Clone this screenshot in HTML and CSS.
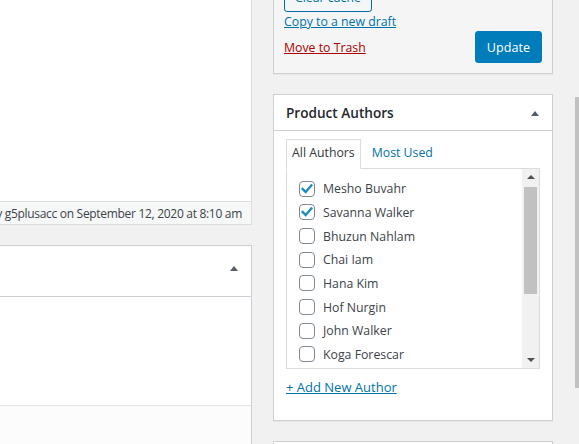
FILE: index.html
```html
<!DOCTYPE html>
<html lang="en">
<head>
<meta charset="utf-8">
<title>Edit Product</title>
<link rel="stylesheet" href="styles.css">
</head>
<body>
<div class="page">
  <div class="main">
    <div class="editor"></div>
    <div class="status"><span class="edited">Last edited by g5plusacc on September 12, 2020 at 8:10 am</span></div>
    <div class="metabox">
      <div class="metabox-head"><span class="tri"></span></div>
      <div class="metabox-body"></div>
      <div class="metabox-foot"></div>
    </div>
  </div>

  <div class="side">
    <div class="postbox publish">
      <div class="actions">
        <button class="btn-secondary">Clear cache</button>
        <div class="copy"><a href="#">Copy to a new draft</a></div>
        <div class="action-row">
          <a href="#" class="trash">Move to Trash</a>
          <button class="btn-primary">Update</button>
        </div>
      </div>
    </div>

    <div class="postbox authors">
      <div class="hndle"><h2>Product Authors</h2><span class="tri"></span></div>
      <div class="inside">
        <ul class="tabs">
          <li class="tab active">All Authors</li>
          <li class="tab"><a href="#">Most Used</a></li>
        </ul>
        <div class="panel">
          <ul class="checklist">
            <li><span class="cb checked"><svg viewBox="0 0 16 16" width="16" height="16"><path d="M3.6 7.9 L6.7 11 L12.4 4.4" fill="none" stroke="#1e8cbe" stroke-width="2.3" stroke-linecap="square"/></svg></span>Mesho Buvahr</li>
            <li><span class="cb checked"><svg viewBox="0 0 16 16" width="16" height="16"><path d="M3.6 7.9 L6.7 11 L12.4 4.4" fill="none" stroke="#1e8cbe" stroke-width="2.3" stroke-linecap="square"/></svg></span>Savanna Walker</li>
            <li><span class="cb"></span>Bhuzun Nahlam</li>
            <li><span class="cb"></span>Chai Iam</li>
            <li><span class="cb"></span>Hana Kim</li>
            <li><span class="cb"></span>Hof Nurgin</li>
            <li><span class="cb"></span>John Walker</li>
            <li><span class="cb"></span>Koga Forescar</li>
          </ul>
          <div class="vscroll">
            <div class="sbtn up"></div>
            <div class="track"><div class="thumb"></div></div>
            <div class="sbtn down"></div>
          </div>
        </div>
        <div class="add-wrap"><a href="#" class="add">+ Add New Author</a></div>
      </div>
    </div>

    <div class="postbox next"></div>
  </div>

  <div class="pagescroll"><div class="pthumb"></div></div>
</div>
</body>
</html>
```

FILE: styles.css
```css
* { box-sizing: border-box; }
html, body { margin: 0; padding: 0; }
body {
  width: 579px;
  height: 444px;
  overflow: hidden;
  background: #f1f1f1;
  font-family: "Open Sans", "Noto Sans", sans-serif;
  font-size: 12.3px;
  color: #444;
}
a { color: #0073aa; text-decoration: underline; }

.page { display: flex; height: 444px; }

/* left column */
.main { width: 252px; flex: none; overflow: hidden; }
.editor { height: 201px; background: #fff; border-right: 1px solid #dcdcde; }
.status {
  height: 24px;
  background: #f6f7f7;
  border: 1px solid #dcdcde;
  border-left: 0;
  display: flex;
  justify-content: flex-end;
  align-items: center;
  padding-right: 9px;
  white-space: nowrap;
  color: #3c434a;
  font-size: 12px;
  letter-spacing: -0.3px;
}
.metabox {
  margin-top: 20px;
  background: #fff;
  border: 1px solid #ccd0d4;
  border-left: 0;
  border-bottom: 0;
}
.metabox-head {
  height: 51px;
  border-bottom: 1px solid #ccd0d4;
  display: flex;
  justify-content: flex-end;
  align-items: flex-start;
  padding: 20px 13px 0 0;
}
.metabox-body { height: 108px; }
.metabox-foot { height: 60px; border-top: 1px solid #e2e4e7; background: #fcfcfc; }

.tri {
  width: 0;
  height: 0;
  border-left: 4px solid transparent;
  border-right: 4px solid transparent;
  border-bottom: 5px solid #555d66;
}

/* right column */
.side { width: 280px; flex: none; margin-left: 21px; margin-top: -29px; }
.postbox {
  background: #fff;
  border: 1px solid #ccd0d4;
  box-shadow: 0 1px 1px rgba(0, 0, 0, 0.04);
  margin-bottom: 20px;
}
.publish .actions { background: #f5f5f5; padding: 10px; }
.btn-secondary {
  display: inline-flex;
  align-items: center;
  height: 30px;
  padding: 0 10px;
  border: 1px solid #0071a1;
  border-radius: 3px;
  background: #f3f5f6;
  color: #0071a1;
  font: inherit;
}
.copy { height: 19px; line-height: 19px; }
.action-row { display: flex; justify-content: space-between; align-items: center; height: 32px; }
.trash { color: #a00; }
.btn-primary {
  height: 32px;
  padding: 0 11px;
  background: #007cba;
  border: 1px solid #007cba;
  border-radius: 3px;
  color: #fff;
  font: inherit;
  font-size: 12.6px;
}

.hndle {
  height: 36px;
  border-bottom: 1px solid #ccd0d4;
  display: flex;
  align-items: center;
  justify-content: space-between;
  padding: 0 13px 0 12px;
}
.hndle h2 { margin: 0; font-size: 13.6px; font-weight: 600; color: #23282d; }
.hndle .tri { margin-top: 2px; }

.inside { padding: 8px 12px 0; }
.tabs { display: flex; gap: 5px; margin: 0; padding: 0; list-style: none; }
.tab { padding: 3px 5px 5px; line-height: 19px; border: 1px solid transparent; }
.tab.active {
  border-color: #dcdcde;
  border-bottom-color: #fff;
  background: #fff;
  color: #32373c;
  margin-bottom: -1px;
  position: relative;
  z-index: 1;
}
.tab a { text-decoration: none; }

.panel { height: 201px; border: 1px solid #dcdcde; background: #fff; display: flex; }
.checklist {
  flex: 1;
  margin: 0;
  padding: 8px 0 0 12px;
  list-style: none;
  overflow: hidden;
}
.checklist li { height: 23.65px; display: flex; align-items: center; color: #3c434a; white-space: nowrap; }
.cb {
  width: 16px;
  height: 16px;
  flex: none;
  border: 1px solid #7e8993;
  border-radius: 4px;
  background: #fff;
  margin-right: 8px;
  display: flex;
  align-items: center;
  justify-content: center;
}
.cb svg { display: block; flex: none; }

.vscroll { width: 17px; flex: none; background: #f1f1f1; display: flex; flex-direction: column; }
.sbtn { height: 17px; display: flex; align-items: center; justify-content: center; }
.sbtn.up::before {
  content: "";
  border-left: 4px solid transparent;
  border-right: 4px solid transparent;
  border-bottom: 4px solid #505050;
  margin-top: -2px;
}
.sbtn.down::before {
  content: "";
  border-left: 4px solid transparent;
  border-right: 4px solid transparent;
  border-top: 4px solid #505050;
}
.track { flex: 1; padding: 1px 2px; }
.thumb { height: 107px; background: #c1c1c1; }

.add-wrap { padding: 8px 0 22px; line-height: 20px; }
.add { font-size: 13px; }

.next { height: 40px; margin-bottom: 0; }

.pagescroll { margin-left: 22px; width: 4px; flex: none; padding-top: 97px; }
.pthumb { height: 291px; background: #c1c1c1; }
```
